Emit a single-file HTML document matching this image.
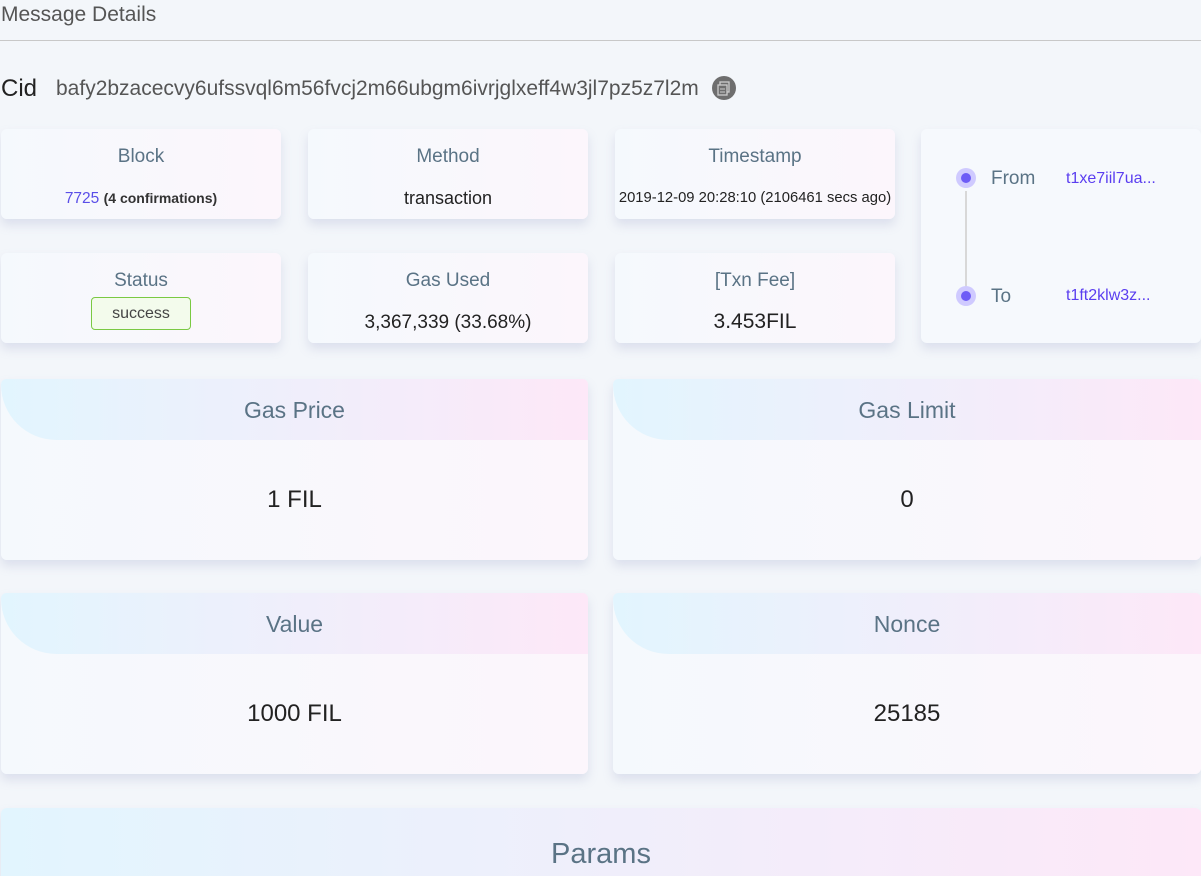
<!DOCTYPE html>
<html style="overflow:hidden"><head><meta charset="utf-8"><style>
*{margin:0;padding:0;box-sizing:border-box}
html,body{width:1201px;height:876px;overflow:hidden}
body{background:#f3f6fa;font-family:"Liberation Sans",sans-serif;position:relative;color:#333}
.abs{position:absolute}
.card{position:absolute;border-radius:6px;background:linear-gradient(90deg,#f5f9fd,#fcf6fc);box-shadow:0 6px 10px rgba(150,160,200,.25);text-align:center}
.lbl{color:#5a7385;font-size:19px}
.hd{position:absolute;left:0;top:0;right:0;height:61px;border-radius:6px 6px 0 0;border-bottom-left-radius:60px;background:linear-gradient(90deg,#e2f5fe,#fde8f8);color:#5a7385;font-size:23px;line-height:63px;text-align:center}
.v{position:absolute;left:0;right:0;top:107px;font-size:24px;color:#222;text-align:center}
</style></head><body>
<div class="abs" style="left:1px;top:3px;font-size:21px;color:#555">Message Details</div>
<div class="abs" style="left:0;top:40px;width:1201px;height:1px;background:#c8c8c8"></div>
<div class="abs" style="left:1px;top:75px;font-size:24px;color:#222">Cid</div>
<div class="abs" style="left:56px;top:77px;font-size:21px;color:#555">bafy2bzacecvy6ufssvql6m56fvcj2m66ubgm6ivrjglxeff4w3jl7pz5z7l2m</div>
<div class="abs" style="left:712px;top:76px;width:24px;height:24px;border-radius:12px;background:#6e6e6e"><svg width="24" height="24"><rect x="8" y="6" width="9" height="10" fill="none" stroke="#ccc" stroke-width="1.3"/><rect x="6" y="9" width="9" height="10" fill="#6e6e6e" stroke="#ccc" stroke-width="1.3"/><line x1="8" y1="13" x2="13" y2="13" stroke="#ccc"/><line x1="8" y1="16" x2="13" y2="16" stroke="#ccc"/></svg></div>

<div class="card" style="left:1px;top:129px;width:280px;height:90px"><div class="lbl" style="margin-top:17px">Block</div><div style="margin-top:22px;font-size:15.5px"><span style="color:#5a4ee8">7725</span> <span style="font-size:14px;font-weight:bold;color:#333">(4 confirmations)</span></div></div>
<div class="card" style="left:308px;top:129px;width:280px;height:90px"><div class="lbl" style="margin-top:17px">Method</div><div style="margin-top:20px;font-size:18px;color:#222">transaction</div></div>
<div class="card" style="left:615px;top:129px;width:280px;height:90px"><div class="lbl" style="margin-top:17px">Timestamp</div><div style="margin-top:22px;font-size:14.8px;color:#222;white-space:nowrap">2019-12-09 20:28:10 (2106461 secs ago)</div></div>
<div class="card" style="left:1px;top:253px;width:280px;height:90px"><div class="lbl" style="margin-top:17px">Status</div><div style="display:inline-block;margin-top:5px;border:1px solid #7ac943;background:#f3fbec;border-radius:4px;width:100px;height:33px;line-height:31px;font-size:16px;color:#444">success</div></div>
<div class="card" style="left:308px;top:253px;width:280px;height:90px"><div class="lbl" style="margin-top:17px">Gas Used</div><div style="margin-top:20px;font-size:19px;color:#222">3,367,339 (33.68%)</div></div>
<div class="card" style="left:615px;top:253px;width:280px;height:90px"><div class="lbl" style="margin-top:17px">[Txn Fee]</div><div style="margin-top:18px;font-size:21px;color:#222">3.453FIL</div></div>

<div class="card" style="left:921px;top:129px;width:280px;height:214px;text-align:left;background:#f6f9fd">
<div class="abs" style="left:44px;top:62px;width:2px;height:104px;background:#d8d8d8"></div>
<div class="abs" style="left:35px;top:39px;width:20px;height:20px;border-radius:10px;background:#cfcaff"><div style="margin:5px;width:10px;height:10px;border-radius:5px;background:#6d5cf6"></div></div>
<div class="abs" style="left:35px;top:157px;width:20px;height:20px;border-radius:10px;background:#cfcaff"><div style="margin:5px;width:10px;height:10px;border-radius:5px;background:#6d5cf6"></div></div>
<div class="abs lbl" style="left:70px;top:39px">From</div>
<div class="abs lbl" style="left:70px;top:157px">To</div>
<div class="abs" style="left:145px;top:41px;font-size:16px;color:#5a3ef0">t1xe7iil7ua...</div>
<div class="abs" style="left:145px;top:158px;font-size:16px;color:#5a3ef0">t1ft2klw3z...</div>
</div>

<div class="card" style="left:1px;top:379px;width:587px;height:181px"><div class="hd">Gas Price</div><div class="v">1 FIL</div></div>
<div class="card" style="left:613px;top:379px;width:588px;height:181px"><div class="hd">Gas Limit</div><div class="v">0</div></div>
<div class="card" style="left:1px;top:593px;width:587px;height:181px"><div class="hd">Value</div><div class="v">1000 FIL</div></div>
<div class="card" style="left:613px;top:593px;width:588px;height:181px"><div class="hd">Nonce</div><div class="v">25185</div></div>
<div class="card" style="left:1px;top:808px;width:1200px;height:90px;background:linear-gradient(90deg,#e2f5fe,#fde8f8)"><div style="margin-top:30px;font-size:29px;color:#5a7385">Params</div></div>
</body></html>
